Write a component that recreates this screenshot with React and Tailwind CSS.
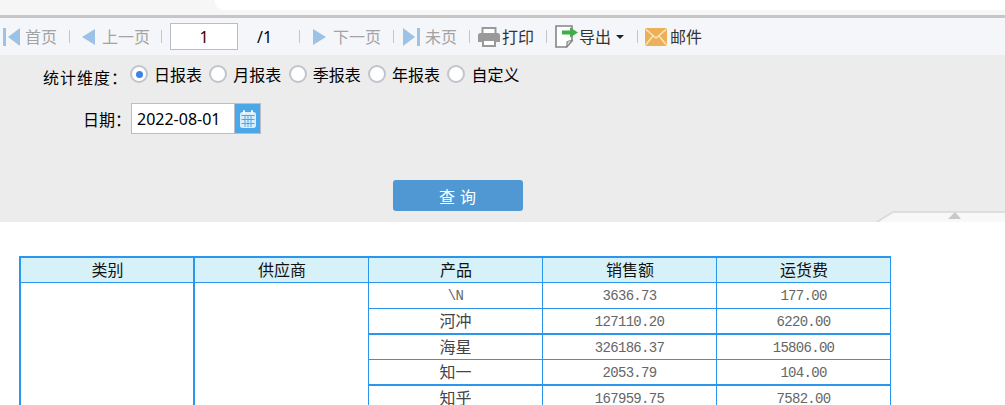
const CJK = '"Noto Sans CJK SC","Noto Sans",sans-serif';

function Sep() {
  return <span className="block w-px h-[13px] bg-[#c4c6cc]" />;
}

function Tri({ dir = "left", bar = false }) {
  const w = bar ? 17 : 13;
  return (
    <svg width={w} height="20" viewBox={`0 0 ${w} 20`} className="shrink-0 block">
      {dir === "left" ? (
        <>
          {bar && <rect x="0" y="1" width="3" height="18" fill="#9cc2e6" />}
          <path d={bar ? "M17 1V19L5 10Z" : "M13 2V18L0 10Z"} fill="#9cc2e6" />
        </>
      ) : (
        <>
          <path d={bar ? "M0 1V19L12 10Z" : "M0 2V18L13 10Z"} fill="#9cc2e6" />
          {bar && <rect x="14" y="1" width="3" height="18" fill="#9cc2e6" />}
        </>
      )}
    </svg>
  );
}

function Printer() {
  return (
    <svg width="22" height="20" viewBox="0 0 22 20" className="shrink-0 block">
      <path d="M4.500 1h13v6h-13z" fill="#fff" stroke="#9a9a9a" strokeWidth="2" />
      <path d="M2.500 6h17A2.500 2.500 0 0 1 22 8.500V15h-4v-3H4v3H0V8.500A2.500 2.500 0 0 1 2.500 6Z" fill="#9a9a9a" />
      <path d="M5 13h12v6H5z" fill="#fff" stroke="#9a9a9a" strokeWidth="2" />
    </svg>
  );
}

function Export() {
  return (
    <svg width="23" height="23" viewBox="0 0 23 23" className="shrink-0 block">
      <path d="M1 1H17V16L11 22H1Z" fill="#fff" stroke="#858585" strokeWidth="1.600" />
      <path d="M17 15.500C15 15.500 13 16 12 17V22Z" fill="#ddd" stroke="#858585" strokeWidth="1.200" />
      <path d="M7 5.500H15V2.500L23 7.500 15 12.500V9.500H7Z" fill="#3fae49" />
    </svg>
  );
}

function Mail() {
  return (
    <svg width="22" height="18" viewBox="0 0 22 18" className="shrink-0 block">
      <rect width="22" height="18" rx="2" fill="#edb057" />
      <path d="M1 1.500 11 10 21 1.500M1 16.500 8 8M21 16.500 14 8" fill="none" stroke="#fbe6c4" strokeWidth="1.400" />
    </svg>
  );
}

function Calendar() {
  return (
    <svg width="18" height="20" viewBox="0 0 18 20" className="block">
      <rect x="1" y="3" width="16" height="16" rx="2.500" fill="#d9edfa" />
      <rect x="4" y="1" width="2" height="4" rx="1" fill="#fff" />
      <rect x="12" y="1" width="2" height="4" rx="1" fill="#fff" />
      <g fill="#4ea9e8">
        <rect x="2.500" y="6" width="13" height="1" />
        <rect x="2.500" y="10" width="13" height="1" />
        <rect x="2.500" y="14" width="13" height="1" />
        <rect x="5.500" y="7" width="1" height="11" />
        <rect x="8.500" y="7" width="1" height="11" />
        <rect x="11.500" y="7" width="1" height="11" />
      </g>
    </svg>
  );
}

function Pager({ children, dim = true, className = "" }) {
  return (
    <span className={`-mt-[2px] text-[16px] leading-none whitespace-nowrap ${dim ? "text-[#a3a3a3]" : "text-[#333]"} ${className}`}>
      {children}
    </span>
  );
}

function Radio({ label, checked }) {
  return (
    <label className="flex items-center gap-[6px]">
      <span className="w-[18px] h-[18px] rounded-full bg-white border-2 border-[#c0c4cc] flex items-center justify-center">
        {checked && <span className="w-[7px] h-[7px] rounded-full bg-[#3d84ea]" />}
      </span>
      <span className="text-[16px] leading-none text-black">{label}</span>
    </label>
  );
}

const rows = [
  ["\\N", "3636.73", "177.00", "h-[26px]", "border-b"],
  ["河冲", "127110.20", "6220.00", "h-[26px]", "border-b-2"],
  ["海星", "326186.37", "15806.00", "h-[25px]", "border-b"],
  ["知一", "2053.79", "104.00", "h-[26px]", "border-b-2"],
  ["知乎", "167959.75", "7582.00", "h-[25px]", "border-b"],
];

function Cell({ children, className = "" }) {
  return (
    <div className={`w-[174px] shrink-0 flex items-center justify-center border-[#2b96ee] ${className}`}>{children}</div>
  );
}

function Head({ children }) {
  return <span className="-mt-[2px] ml-[1px]">{children}</span>;
}

function Num({ children }) {
  return <span className="mt-[1px] leading-none tracking-[-0.7px]">{children}</span>;
}

export default function App() {
  return (
    <div className="w-[1005px] h-[405px] overflow-hidden bg-white relative" style={{ fontFamily: CJK }}>
      {/* browser strip */}
      <div className="h-[15px] bg-[#f6f6f6] pl-[215px]">
        <div className="h-[10px] bg-white rounded-bl-[8px]" />
      </div>
      <div className="h-[3px] bg-[#c6c6c6]" />

      {/* toolbar */}
      <div className="h-[37px] bg-[#f5f6f9] flex items-center pl-[3px]">
        <Tri dir="left" bar />
        <Pager className="ml-[5px]">首页</Pager>
        <span className="ml-[12px]"><Sep /></span>
        <span className="ml-[12px]"><Tri dir="left" /></span>
        <Pager className="ml-[7px]">上一页</Pager>
        <span className="ml-[11px]"><Sep /></span>
        <div className="ml-[8px] w-[68px] h-[27px] border border-[#b9bccb] bg-white flex items-center justify-center text-[16px] text-[#3a0000]" style={{ fontFamily: '"Noto Sans",sans-serif' }}>1</div>
        <span className="ml-[19px] w-[42px] text-[16px] text-black" style={{ fontFamily: '"Noto Sans",sans-serif' }}>/1</span>
        <Sep />
        <span className="ml-[13px]"><Tri dir="right" /></span>
        <Pager className="ml-[7px]">下一页</Pager>
        <span className="ml-[12px]"><Sep /></span>
        <span className="ml-[9px]"><Tri dir="right" bar /></span>
        <Pager className="ml-[5px]">未页</Pager>
        <span className="ml-[12px]"><Sep /></span>
        <span className="ml-[8px]"><Printer /></span>
        <Pager dim={false} className="ml-[2px]">打印</Pager>
        <span className="ml-[12px]"><Sep /></span>
        <span className="ml-[8px]"><Export /></span>
        <Pager dim={false} className="ml-[1px]">导出</Pager>
        <span className="ml-[5px] w-0 h-0 border-x-[4px] border-x-transparent border-t-[4px] border-t-[#222]" />
        <span className="ml-[13px]"><Sep /></span>
        <span className="ml-[7px]"><Mail /></span>
        <Pager dim={false} className="ml-[3px]">邮件</Pager>
      </div>

      {/* form */}
      <div className="h-[167px] bg-[#ececec] flex flex-col">
        <div className="flex items-center h-[18px] mt-[10px] pl-[43px]">
          <span className="w-[87px] text-[16px] leading-none text-black whitespace-nowrap tracking-[1px] mt-[6px]">统计维度：</span>
          <div className="flex items-center gap-[7.330px]">
            <Radio label="日报表" checked />
            <Radio label="月报表" />
            <Radio label="季报表" />
            <Radio label="年报表" />
            <Radio label="自定义" />
          </div>
        </div>
        <div className="flex items-center mt-[20px] pl-[83px]">
          <span className="w-[48px] text-[16px] leading-none text-black whitespace-nowrap">日期：</span>
          <div className="w-[104px] h-[31px] bg-white border border-[#b9bccb] flex items-center pl-[5px] text-[16px] text-black" style={{ fontFamily: '"Noto Sans",sans-serif' }}>2022-08-01</div>
          <div className="w-[26px] h-[31px] bg-[#4aa8e8] border border-l-0 border-[#b9bccb] flex items-center justify-center"><Calendar /></div>
        </div>
        <div className="flex mt-[46px] pl-[393px]">
          <button className="w-[130px] h-[31px] pl-[4px] bg-[#4f98d4] rounded-[3px] text-white text-[16px] tracking-[5px]">查询</button>
        </div>
      </div>

      {/* collapse handle */}
      <svg className="absolute left-[876px] top-[211px]" width="129" height="11" viewBox="0 0 129 11">
        <path d="M1 11 17 1H129V11Z" fill="#f8f8f8" />
        <path d="M1 11 17 1H129" fill="none" stroke="#d8d8d8" strokeWidth="1.500" />
        <path d="M72 8 79 1 85 8Z" fill="#c9c9c9" />
      </svg>

      {/* table */}
      <div className="pl-[19px] pt-[34px]">
        <div className="w-[872px] border-t-2 border-l-2 border-[#2b96ee] text-[#111]">
          <div className="flex h-[25px] bg-[#d7f1f9] border-b border-[#2b96ee] text-[16px] leading-none">
            <Cell className="border-r-2"><Head>类别</Head></Cell>
            <Cell className="border-r"><Head>供应商</Head></Cell>
            <Cell className="border-r"><Head>产品</Head></Cell>
            <Cell className="border-r"><Head>销售额</Head></Cell>
            <Cell className="border-r"><Head>运货费</Head></Cell>
          </div>
          <div className="flex">
            <div className="w-[174px] h-[140px] border-r-2 border-[#2b96ee]" />
            <div className="w-[174px] h-[140px] border-r border-[#2b96ee]" />
            <div className="flex flex-col">
              {rows.map(([p, s, f, h, b]) => (
                <div key={p} className={`flex ${h} ${b} border-[#2b96ee] text-[14px] text-[#666]`} style={{ fontFamily: `"Liberation Mono",${CJK}` }}>
                  <Cell className="border-r">
                    {p === "\\N" ? (
                      <Num>{p}</Num>
                    ) : (
                      <span className="-mt-[3px] text-[16px] leading-none text-[#444]" style={{ fontFamily: CJK }}>{p}</span>
                    )}
                  </Cell>
                  <Cell className="border-r"><Num>{s}</Num></Cell>
                  <Cell className="border-r"><Num>{f}</Num></Cell>
                </div>
              ))}
            </div>
          </div>
        </div>
      </div>
    </div>
  );
}
